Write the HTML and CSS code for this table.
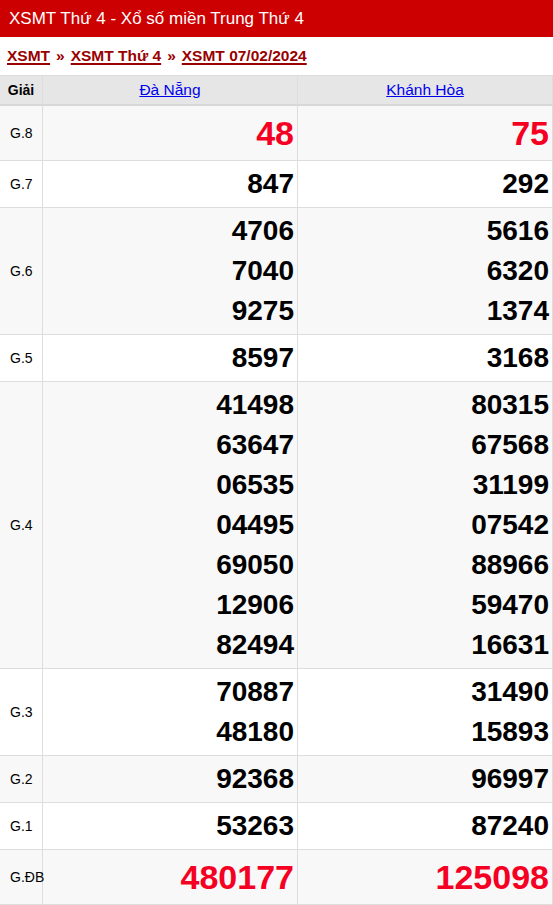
FILE: index.html
```html
<!DOCTYPE html>
<html lang="vi">
<head>
<meta charset="utf-8">
<title>XSMT Thứ 4</title>
<link rel="stylesheet" href="styles.css">
</head>
<body>
<h1 class="title">XSMT Thứ 4 - Xổ số miền Trung Thứ 4</h1>
<div class="crumbs">
  <a href="#">XSMT</a><span class="sep">»</span><a href="#">XSMT Thứ 4</a><span class="sep">»</span><a href="#">XSMT 07/02/2024</a>
</div>
<table class="kq">
  <thead>
    <tr><th class="g">Giải</th><th><a href="#">Đà Nẵng</a></th><th><a href="#">Khánh Hòa</a></th></tr>
  </thead>
  <tbody>
    <tr class="alt big"><td class="g">G.8</td><td class="red">48</td><td class="red">75</td></tr>
    <tr><td class="g">G.7</td><td>847</td><td>292</td></tr>
    <tr class="alt"><td class="g">G.6</td><td>4706<br>7040<br>9275</td><td>5616<br>6320<br>1374</td></tr>
    <tr><td class="g">G.5</td><td>8597</td><td>3168</td></tr>
    <tr class="alt"><td class="g">G.4</td><td>41498<br>63647<br>06535<br>04495<br>69050<br>12906<br>82494</td><td>80315<br>67568<br>31199<br>07542<br>88966<br>59470<br>16631</td></tr>
    <tr><td class="g">G.3</td><td>70887<br>48180</td><td>31490<br>15893</td></tr>
    <tr class="alt"><td class="g">G.2</td><td>92368</td><td>96997</td></tr>
    <tr><td class="g">G.1</td><td>53263</td><td>87240</td></tr>
    <tr class="alt big"><td class="g">G.ĐB</td><td class="red">480177</td><td class="red">125098</td></tr>
  </tbody>
</table>
</body>
</html>
```
FILE: styles.css
```css
html, body {
  margin: 0;
  padding: 0;
  background: #fff;
  font-family: "Liberation Sans", Arial, sans-serif;
  color: #000;
}
.title {
  margin: 0;
  background: #cc0000;
  color: #fff;
  font-size: 17px;
  font-weight: normal;
  height: 37px;
  line-height: 37px;
  padding: 0 9px;
}
.crumbs {
  padding: 0 7px;
  height: 38px;
  line-height: 38px;
  font-size: 15.5px;
  font-weight: bold;
}
.crumbs a {
  color: #990000;
  text-decoration: underline;
  text-decoration-thickness: 2px;
  text-underline-offset: 2px;
}
.crumbs .sep {
  color: #990000;
  margin: 0 6px;
}
.kq {
  width: 553px;
  border-collapse: collapse;
  table-layout: fixed;
}
.kq th, .kq td {
  border: 1px solid #dddddd;
}
.kq tr > :first-child { border-left: none; }
.kq thead th {
  background: #e6e6e6;
  height: 28px;
  padding: 0;
  font-size: 15.5px;
  font-weight: normal;
  border-bottom: 2px solid #d8d8d8;
  text-align: center;
}
.kq thead th a {
  color: #0000ee;
  text-decoration: underline;
}
.kq thead th.g {
  width: 42px;
  font-size: 14px;
  font-weight: bold;
}
.kq td {
  text-align: right;
  padding: 3px 3px 3px 4px;
  font-size: 28px;
  font-weight: bold;
  line-height: 40px;
  vertical-align: middle;
}
.kq td.g {
  text-align: left;
  font-size: 14px;
  font-weight: normal;
  padding-left: 10px;
  padding-right: 0;
}
.kq tr.alt td { background: #f8f8f8; }
.kq tr.big td { height: 48px; }
.kq td.red {
  color: #f50022;
  font-size: 34px;
  line-height: 48px;
}
```
